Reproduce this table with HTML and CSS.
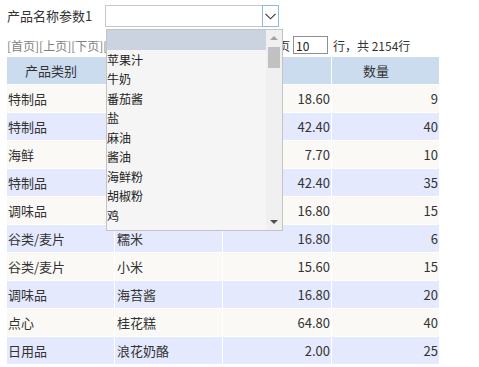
FILE: index.html
```html
<!DOCTYPE html>
<html lang="zh-CN">
<head>
<meta charset="utf-8">
<title>产品报表</title>
<link rel="stylesheet" href="styles.css">
</head>
<body>
<div class="page">
  <div class="param-row">
    <span class="param-label">产品名称参数1</span>
    <div class="combo">
      <div class="combo-input"></div>
      <div class="combo-btn">
        <svg width="11" height="7" viewBox="0 0 11 7"><path d="M0.5 0.8 L5.5 5.8 L10.5 0.8" fill="none" stroke="#333" stroke-width="1.1"/></svg>
      </div>
      <div class="dropdown">
        <ul class="options">
          <li class="selected">&nbsp;</li>
          <li>苹果汁</li>
          <li>牛奶</li>
          <li>番茄酱</li>
          <li>盐</li>
          <li>麻油</li>
          <li>酱油</li>
          <li>海鲜粉</li>
          <li>胡椒粉</li>
          <li>鸡</li>
        </ul>
        <div class="scrollbar">
          <div class="sb-arrow up"></div>
          <div class="sb-track"><div class="sb-thumb"></div></div>
          <div class="sb-arrow down"></div>
        </div>
      </div>
    </div>
  </div>

  <div class="pager">
    <div class="pager-left">
      <span class="links">[首页][上页][下页][</span>
      <span class="goto">页</span>
    </div>
    <input class="page-size" type="text" value="10">
    <span class="total">行，共 2154行</span>
  </div>

  <table class="grid">
    <colgroup><col class="c1"><col class="c2"><col class="c3"><col class="c4"></colgroup>
    <thead>
      <tr><th>产品类别</th><th></th><th></th><th>数量</th></tr>
    </thead>
    <tbody>
      <tr><td>特制品</td><td></td><td class="num">18.60</td><td class="num">9</td></tr>
      <tr><td>特制品</td><td></td><td class="num">42.40</td><td class="num">40</td></tr>
      <tr><td>海鲜</td><td></td><td class="num">7.70</td><td class="num">10</td></tr>
      <tr><td>特制品</td><td></td><td class="num">42.40</td><td class="num">35</td></tr>
      <tr><td>调味品</td><td></td><td class="num">16.80</td><td class="num">15</td></tr>
      <tr><td>谷类/麦片</td><td>糯米</td><td class="num">16.80</td><td class="num">6</td></tr>
      <tr><td>谷类/麦片</td><td>小米</td><td class="num">15.60</td><td class="num">15</td></tr>
      <tr><td>调味品</td><td>海苔酱</td><td class="num">16.80</td><td class="num">20</td></tr>
      <tr><td>点心</td><td>桂花糕</td><td class="num">64.80</td><td class="num">40</td></tr>
      <tr><td>日用品</td><td>浪花奶酪</td><td class="num">2.00</td><td class="num">25</td></tr>
    </tbody>
  </table>
</div>
</body>
</html>
```

FILE: styles.css
```css
* { box-sizing: border-box; }
html, body { margin: 0; padding: 0; background: #fff; }
body {
  font-family: "Noto Sans CJK SC", "Noto Sans", sans-serif;
  font-size: 13px;
  color: #333;
}
.page { padding: 5px 0 0 7px; }

.param-row { display: flex; align-items: center; height: 22px; }
.param-label { width: 98px; font-size: 13px; line-height: 22px; color: #333; }

.combo {
  position: relative;
  width: 174px;
  height: 22px;
  border: 1px solid #c8c8c8;
  display: flex;
  background: #fff;
}
.combo-input { flex: 1; }
.combo-btn {
  width: 17px;
  margin: -1px -1px -1px 0;
  border: 1px solid #8db8ec;
  background: #fff;
  display: flex;
  align-items: center;
  justify-content: center;
}

.dropdown {
  position: absolute;
  left: 0;
  top: 23px;
  width: 177px;
  height: 202px;
  border: 1px solid #c4c4c4;
  background: #f5f5f5;
  display: flex;
  z-index: 10;
  overflow: hidden;
}
.options {
  list-style: none;
  margin: 0;
  padding: 0;
  flex: 1;
  overflow: hidden;
}
.options li {
  height: 19.5px;
  line-height: 19.5px;
  font-size: 12px;
  color: #222;
  padding-left: 0;
  white-space: nowrap;
}
.options li.selected { background: #cbd3e1; }

.scrollbar {
  width: 16px;
  background: #f0f0f0;
  display: flex;
  flex-direction: column;
  align-items: center;
}
.sb-arrow { height: 17px; width: 16px; position: relative; }
.sb-arrow.up::after, .sb-arrow.down::after {
  content: "";
  position: absolute;
  left: 4px;
  width: 0; height: 0;
  border-left: 4px solid transparent;
  border-right: 4px solid transparent;
}
.sb-arrow.up::after { top: 6px; border-bottom: 4px solid #a3a3a3; }
.sb-arrow.down::after { top: 7px; border-top: 4px solid #505050; }
.sb-track { flex: 1; width: 16px; display: flex; justify-content: center; }
.sb-thumb { width: 12px; height: 21px; background: #c1c1c1; }

.pager {
  margin-top: 9px;
  height: 18px;
  display: flex;
  align-items: center;
  font-size: 12px;
}
.pager-left {
  width: 283px;
  display: flex;
  justify-content: space-between;
  color: #333;
}
.links { color: #808080; }
.page-size {
  margin-left: 3px;
  width: 35px;
  height: 18px;
  border: 1px solid #8f8f8f;
  padding: 0 2px;
  font-family: "Noto Sans CJK SC", "Noto Sans", sans-serif;
  font-size: 12px;
  color: #222;
  outline: none;
}
.total { margin-left: 5px; color: #333; }

.grid {
  margin-top: 3px;
  table-layout: fixed;
  width: 432px;
  border-collapse: separate;
  border-spacing: 0;
}
.grid col.c1 { width: 108px; }
.grid col.c2 { width: 108px; }
.grid col.c3 { width: 109px; }
.grid col.c4 { width: 107px; }
.grid th, .grid td {
  height: 28px;
  border-right: 1px solid #fff;
  border-bottom: 1px solid #fff;
  padding: 0 1px;
  font-size: 13px;
  font-weight: normal;
  color: #333;
  white-space: nowrap;
  overflow: hidden;
}
.grid th:last-child, .grid td:last-child { border-right: 0; }
.grid th {
  background: #ccdcef;
  text-align: center;
  padding-right: 20px;
}
.grid td { text-align: left; }
.grid td.num { text-align: right; }
.grid tbody tr:nth-child(odd) td { background: #faf9f5; }
.grid tbody tr:nth-child(even) td { background: #e5e9fd; }
.grid td:nth-child(2) { padding-left: 2px; }
```
